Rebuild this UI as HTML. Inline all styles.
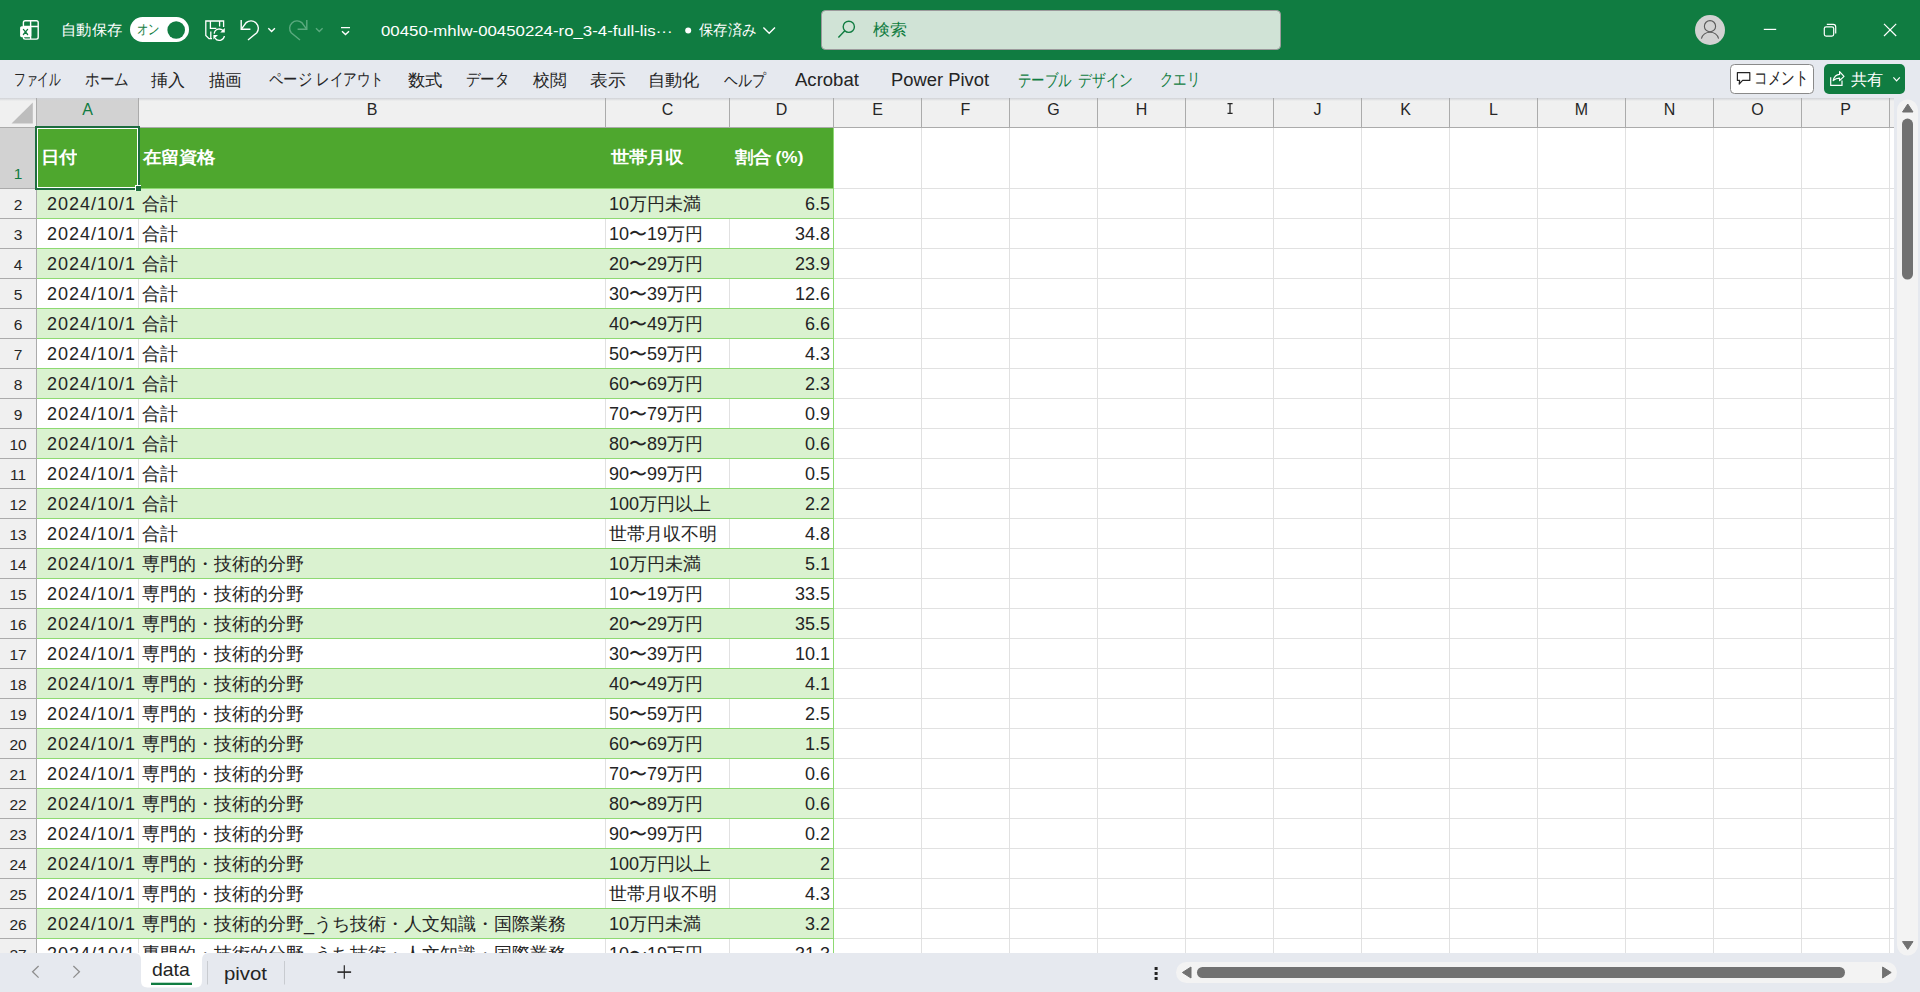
<!DOCTYPE html><html><head><meta charset="utf-8"><style>
*{margin:0;padding:0;box-sizing:border-box}
html,body{width:1920px;height:992px;overflow:hidden;background:#fff;font-family:"Liberation Sans",sans-serif}
.a{position:absolute}
.t{position:absolute;white-space:nowrap}
.wt{position:absolute;color:#fff;white-space:nowrap}
.tab{position:absolute;top:60px;height:38px;line-height:38px;font-size:17px;color:#242424;white-space:nowrap}
.ch{position:absolute;top:98px;height:29px;line-height:18px;padding-top:3px;text-align:center;font-size:16px;color:#262626}
.rh{position:absolute;left:0;width:36px;height:29px;line-height:18px;padding-top:7px;text-align:center;font-size:15.5px;color:#262626}
.c{position:absolute;height:29px;line-height:30px;font-size:18px;color:#242424;white-space:nowrap;letter-spacing:0}
.d{letter-spacing:1px}
.tht{position:absolute;top:128px;height:60px;line-height:59px;font-size:18px;transform:scaleY(0.92);transform-origin:0 50%;font-weight:bold;color:#fff;white-space:nowrap}
</style></head><body>
<div class="a" style="left:0;top:0;width:1920px;height:60px;background:#107C41"></div>

<svg class="a" style="left:0;top:0" width="1920" height="60" viewBox="0 0 1920 60">
 <g fill="none" stroke="#fff" stroke-width="1.4">
  <rect x="23.4" y="20.8" width="14.8" height="18.3" rx="1.8"/>
  <path d="M30.6 20.8 V39.1 M23.4 26.5 H38.2"/>
 </g>
 <rect x="20.1" y="26.2" width="11.2" height="11" rx="1.6" fill="#fff"/>
 <path d="M23.4 29.4 L27.6 34.5 M27.6 29.4 L23.4 34.5" stroke="#107C41" stroke-width="1.3" stroke-linecap="round"/>
 <rect x="130" y="17" width="59" height="25" rx="12.5" fill="#fff"/>
 <circle cx="176.2" cy="30" r="8.8" fill="#107C41"/>
 <g fill="none" stroke="#fff" stroke-width="1.3">
  <path d="M223.6 27 V21 H205.8 V35.4 L209 38.6 H212"/>
  <path d="M210.4 21 V28.3 H216.4 M219.6 21 V26.6 M210.8 31.4 V38"/>
  <path d="M214.2 33.6 A5.2 5.2 0 0 1 223.6 31.2 M224.4 36 A5.2 5.2 0 0 1 215 38.2"/>
 </g>
 <path d="M224.8 28 V32.6 H220.2 Z M213.4 39.6 V35 H218 Z" fill="#fff"/>
 <g fill="none" stroke="#fff" stroke-width="1.4">
  <path d="M241.2 20 V29.2 H250.4"/>
  <path d="M241.6 28.8 L246.2 22.6 A7.4 7.4 0 0 1 256.8 32.8 L248 40"/>
  <path d="M268.3 28.2 L271.6 31.4 L274.9 28.2"/>
  <path d="M341 27.6 H350 M342 31.2 L345.5 34.6 L349 31.2"/>
 </g>
 <g fill="none" stroke="#5BAA7F" stroke-width="1.4">
  <path d="M306.8 20 V29.2 H297.6"/>
  <path d="M306.4 28.8 L301.8 22.6 A7.4 7.4 0 0 0 291.2 32.8 L300 40"/>
  <path d="M316 28.2 L319.3 31.4 L322.6 28.2"/>
 </g>
 <circle cx="688.2" cy="30.4" r="3" fill="#fff"/>
 <path d="M763.4 27.4 L769.2 33.2 L775 27.4" fill="none" stroke="#fff" stroke-width="1.4"/>
 <rect x="821.5" y="10.5" width="459" height="39" rx="4" fill="#D0E3D6" stroke="#9C9A9C" stroke-width="1"/>
 <g fill="none" stroke="#107C41" stroke-width="1.4">
  <circle cx="848.8" cy="26.8" r="5.6"/>
  <path d="M844.8 30.8 L838.4 37.6"/>
 </g>
 <circle cx="1710" cy="30" r="15" fill="#D2D2D2"/>
 <g fill="none" stroke="#5A5A5A" stroke-width="1.1">
  <circle cx="1710" cy="26.2" r="5.6"/>
  <path d="M1701.4 38.6 A9 9 0 0 1 1718.6 38.6"/>
 </g>
 <g fill="none" stroke="#fff" stroke-width="1.2">
  <path d="M1763.8 29.4 H1776.2"/>
  <rect x="1824.3" y="26.8" width="9.4" height="9.3" rx="1.8"/>
  <path d="M1826.8 24.4 H1833.2 Q1835.7 24.4 1835.7 26.9 V33.4"/>
  <path d="M1884 23.8 L1896.2 36 M1896.2 23.8 L1884 36"/>
 </g>
</svg>

<div class="a" style="left:0;top:60px;width:1920px;height:38px;background:#E6E9EF"></div>

<svg class="a" style="left:1720px;top:60px" width="200" height="38" viewBox="1720 60 200 38">
 <rect x="1730.5" y="64.5" width="83" height="29" rx="4" fill="#fff" stroke="#8A8A8A"/>
 <path d="M1737.4 72.6 H1749.8 V80.4 H1742.6 L1739.2 84 L1739.6 80.4 H1737.4 Z" fill="none" stroke="#242424" stroke-width="1.2" stroke-linejoin="round"/>
 <rect x="1824" y="64" width="81" height="30" rx="5" fill="#107C41"/>
 <g fill="none" stroke="#fff" stroke-width="1.2">
  <path d="M1830.7 77.2 V85.3 H1842 V80.6"/>
  <path d="M1833.2 80.6 Q1834.6 74.6 1839.6 74.4 V71.6 L1844 76.4 L1839.6 80.6 V78.2 Q1836 78.1 1833.2 80.6 Z" stroke-linejoin="round"/>
  <path d="M1893.4 77.4 L1896.6 80.8 L1899.8 77.4"/>
 </g>
</svg>

<div class="a" style="left:0;top:98px;width:1894px;height:29px;background:#F0F0F0"></div>
<div class="a" style="left:37px;top:98px;width:101px;height:29px;background:#D2D2D2"></div>
<div class="a" style="left:0;top:98px;width:1894px;height:3px;background:linear-gradient(#D0D2D6,rgba(240,240,240,0))"></div>
<div class="a" style="left:0;top:127px;width:1894px;height:1px;background:#ABABAB"></div>
<div class="a" style="left:0;top:128px;width:36px;height:825px;background:#F0F0F0"></div>
<div class="a" style="left:0;top:128px;width:36px;height:60px;background:#D2D2D2"></div>
<div class="ch" style="left:37px;width:101px;color:#107C41">A</div>
<div class="a" style="left:138px;top:98px;width:1px;height:29px;background:#ABABAB"></div>
<div class="ch" style="left:139px;width:466px;color:#262626">B</div>
<div class="a" style="left:605px;top:98px;width:1px;height:29px;background:#ABABAB"></div>
<div class="ch" style="left:606px;width:123px;color:#262626">C</div>
<div class="a" style="left:729px;top:98px;width:1px;height:29px;background:#ABABAB"></div>
<div class="ch" style="left:730px;width:103px;color:#262626">D</div>
<div class="a" style="left:833px;top:98px;width:1px;height:29px;background:#ABABAB"></div>
<div class="ch" style="left:834px;width:87px;color:#262626">E</div>
<div class="a" style="left:921px;top:98px;width:1px;height:29px;background:#ABABAB"></div>
<div class="ch" style="left:922px;width:87px;color:#262626">F</div>
<div class="a" style="left:1009px;top:98px;width:1px;height:29px;background:#ABABAB"></div>
<div class="ch" style="left:1010px;width:87px;color:#262626">G</div>
<div class="a" style="left:1097px;top:98px;width:1px;height:29px;background:#ABABAB"></div>
<div class="ch" style="left:1098px;width:87px;color:#262626">H</div>
<div class="a" style="left:1185px;top:98px;width:1px;height:29px;background:#ABABAB"></div>
<svg class="a" style="left:1186px;top:98px" width="87" height="29"><path d="M41.5 5.6 H46.6 M41.5 15.4 H46.6 M44.0 5.6 V15.4" stroke="#262626" stroke-width="1.3" fill="none"/></svg>
<div class="a" style="left:1273px;top:98px;width:1px;height:29px;background:#ABABAB"></div>
<div class="ch" style="left:1274px;width:87px;color:#262626">J</div>
<div class="a" style="left:1361px;top:98px;width:1px;height:29px;background:#ABABAB"></div>
<div class="ch" style="left:1362px;width:87px;color:#262626">K</div>
<div class="a" style="left:1449px;top:98px;width:1px;height:29px;background:#ABABAB"></div>
<div class="ch" style="left:1450px;width:87px;color:#262626">L</div>
<div class="a" style="left:1537px;top:98px;width:1px;height:29px;background:#ABABAB"></div>
<div class="ch" style="left:1538px;width:87px;color:#262626">M</div>
<div class="a" style="left:1625px;top:98px;width:1px;height:29px;background:#ABABAB"></div>
<div class="ch" style="left:1626px;width:87px;color:#262626">N</div>
<div class="a" style="left:1713px;top:98px;width:1px;height:29px;background:#ABABAB"></div>
<div class="ch" style="left:1714px;width:87px;color:#262626">O</div>
<div class="a" style="left:1801px;top:98px;width:1px;height:29px;background:#ABABAB"></div>
<div class="ch" style="left:1802px;width:87px;color:#262626">P</div>
<div class="a" style="left:1889px;top:98px;width:1px;height:29px;background:#ABABAB"></div>
<div class="a" style="left:36px;top:98px;width:1px;height:855px;background:#ABABAB"></div>
<div class="a" style="left:138px;top:128px;width:1px;height:825px;background:#E1E1E1"></div>
<div class="a" style="left:605px;top:128px;width:1px;height:825px;background:#E1E1E1"></div>
<div class="a" style="left:729px;top:128px;width:1px;height:825px;background:#E1E1E1"></div>
<div class="a" style="left:833px;top:128px;width:1px;height:825px;background:#E1E1E1"></div>
<div class="a" style="left:921px;top:128px;width:1px;height:825px;background:#E1E1E1"></div>
<div class="a" style="left:1009px;top:128px;width:1px;height:825px;background:#E1E1E1"></div>
<div class="a" style="left:1097px;top:128px;width:1px;height:825px;background:#E1E1E1"></div>
<div class="a" style="left:1185px;top:128px;width:1px;height:825px;background:#E1E1E1"></div>
<div class="a" style="left:1273px;top:128px;width:1px;height:825px;background:#E1E1E1"></div>
<div class="a" style="left:1361px;top:128px;width:1px;height:825px;background:#E1E1E1"></div>
<div class="a" style="left:1449px;top:128px;width:1px;height:825px;background:#E1E1E1"></div>
<div class="a" style="left:1537px;top:128px;width:1px;height:825px;background:#E1E1E1"></div>
<div class="a" style="left:1625px;top:128px;width:1px;height:825px;background:#E1E1E1"></div>
<div class="a" style="left:1713px;top:128px;width:1px;height:825px;background:#E1E1E1"></div>
<div class="a" style="left:1801px;top:128px;width:1px;height:825px;background:#E1E1E1"></div>
<div class="a" style="left:1889px;top:128px;width:1px;height:825px;background:#E1E1E1"></div>
<div class="a" style="left:37px;top:188px;width:1857px;height:1px;background:#E1E1E1"></div>
<div class="a" style="left:0;top:188px;width:36px;height:1px;background:#ABABAB"></div>
<div class="a" style="left:37px;top:218px;width:1857px;height:1px;background:#E1E1E1"></div>
<div class="a" style="left:0;top:218px;width:36px;height:1px;background:#ABABAB"></div>
<div class="a" style="left:37px;top:248px;width:1857px;height:1px;background:#E1E1E1"></div>
<div class="a" style="left:0;top:248px;width:36px;height:1px;background:#ABABAB"></div>
<div class="a" style="left:37px;top:278px;width:1857px;height:1px;background:#E1E1E1"></div>
<div class="a" style="left:0;top:278px;width:36px;height:1px;background:#ABABAB"></div>
<div class="a" style="left:37px;top:308px;width:1857px;height:1px;background:#E1E1E1"></div>
<div class="a" style="left:0;top:308px;width:36px;height:1px;background:#ABABAB"></div>
<div class="a" style="left:37px;top:338px;width:1857px;height:1px;background:#E1E1E1"></div>
<div class="a" style="left:0;top:338px;width:36px;height:1px;background:#ABABAB"></div>
<div class="a" style="left:37px;top:368px;width:1857px;height:1px;background:#E1E1E1"></div>
<div class="a" style="left:0;top:368px;width:36px;height:1px;background:#ABABAB"></div>
<div class="a" style="left:37px;top:398px;width:1857px;height:1px;background:#E1E1E1"></div>
<div class="a" style="left:0;top:398px;width:36px;height:1px;background:#ABABAB"></div>
<div class="a" style="left:37px;top:428px;width:1857px;height:1px;background:#E1E1E1"></div>
<div class="a" style="left:0;top:428px;width:36px;height:1px;background:#ABABAB"></div>
<div class="a" style="left:37px;top:458px;width:1857px;height:1px;background:#E1E1E1"></div>
<div class="a" style="left:0;top:458px;width:36px;height:1px;background:#ABABAB"></div>
<div class="a" style="left:37px;top:488px;width:1857px;height:1px;background:#E1E1E1"></div>
<div class="a" style="left:0;top:488px;width:36px;height:1px;background:#ABABAB"></div>
<div class="a" style="left:37px;top:518px;width:1857px;height:1px;background:#E1E1E1"></div>
<div class="a" style="left:0;top:518px;width:36px;height:1px;background:#ABABAB"></div>
<div class="a" style="left:37px;top:548px;width:1857px;height:1px;background:#E1E1E1"></div>
<div class="a" style="left:0;top:548px;width:36px;height:1px;background:#ABABAB"></div>
<div class="a" style="left:37px;top:578px;width:1857px;height:1px;background:#E1E1E1"></div>
<div class="a" style="left:0;top:578px;width:36px;height:1px;background:#ABABAB"></div>
<div class="a" style="left:37px;top:608px;width:1857px;height:1px;background:#E1E1E1"></div>
<div class="a" style="left:0;top:608px;width:36px;height:1px;background:#ABABAB"></div>
<div class="a" style="left:37px;top:638px;width:1857px;height:1px;background:#E1E1E1"></div>
<div class="a" style="left:0;top:638px;width:36px;height:1px;background:#ABABAB"></div>
<div class="a" style="left:37px;top:668px;width:1857px;height:1px;background:#E1E1E1"></div>
<div class="a" style="left:0;top:668px;width:36px;height:1px;background:#ABABAB"></div>
<div class="a" style="left:37px;top:698px;width:1857px;height:1px;background:#E1E1E1"></div>
<div class="a" style="left:0;top:698px;width:36px;height:1px;background:#ABABAB"></div>
<div class="a" style="left:37px;top:728px;width:1857px;height:1px;background:#E1E1E1"></div>
<div class="a" style="left:0;top:728px;width:36px;height:1px;background:#ABABAB"></div>
<div class="a" style="left:37px;top:758px;width:1857px;height:1px;background:#E1E1E1"></div>
<div class="a" style="left:0;top:758px;width:36px;height:1px;background:#ABABAB"></div>
<div class="a" style="left:37px;top:788px;width:1857px;height:1px;background:#E1E1E1"></div>
<div class="a" style="left:0;top:788px;width:36px;height:1px;background:#ABABAB"></div>
<div class="a" style="left:37px;top:818px;width:1857px;height:1px;background:#E1E1E1"></div>
<div class="a" style="left:0;top:818px;width:36px;height:1px;background:#ABABAB"></div>
<div class="a" style="left:37px;top:848px;width:1857px;height:1px;background:#E1E1E1"></div>
<div class="a" style="left:0;top:848px;width:36px;height:1px;background:#ABABAB"></div>
<div class="a" style="left:37px;top:878px;width:1857px;height:1px;background:#E1E1E1"></div>
<div class="a" style="left:0;top:878px;width:36px;height:1px;background:#ABABAB"></div>
<div class="a" style="left:37px;top:908px;width:1857px;height:1px;background:#E1E1E1"></div>
<div class="a" style="left:0;top:908px;width:36px;height:1px;background:#ABABAB"></div>
<div class="a" style="left:37px;top:938px;width:1857px;height:1px;background:#E1E1E1"></div>
<div class="a" style="left:0;top:938px;width:36px;height:1px;background:#ABABAB"></div>
<div class="a" style="left:37px;top:968px;width:1857px;height:1px;background:#E1E1E1"></div>
<div class="a" style="left:0;top:968px;width:36px;height:1px;background:#ABABAB"></div>
<div class="a" style="left:37px;top:128px;width:796px;height:60px;background:#4EA72E"></div>
<div class="tht" style="left:41px">日付</div>
<div class="tht" style="left:143px">在留資格</div>
<div class="tht" style="left:611px">世帯月収</div>
<div class="tht" style="left:734.5px">割合 (%)</div>
<div class="a" style="left:37px;top:189px;width:796px;height:29px;background:#DAF2D0"></div>
<div class="a" style="left:37px;top:218px;width:796px;height:1px;background:#8ED973"></div>
<div class="a" style="left:37px;top:188px;width:796px;height:1px;background:#8ED973"></div>
<div class="c d" style="top:189px;left:47px">2024/10/1</div>
<div class="c" style="top:189px;left:142px">合計</div>
<div class="c" style="top:189px;left:609px">10万円未満</div>
<div class="c" style="top:189px;right:1090px">6.5</div>
<div class="rh" style="top:189px">2</div>
<div class="a" style="left:37px;top:248px;width:796px;height:1px;background:#8ED973"></div>
<div class="c d" style="top:219px;left:47px">2024/10/1</div>
<div class="c" style="top:219px;left:142px">合計</div>
<div class="c" style="top:219px;left:609px">10〜19万円</div>
<div class="c" style="top:219px;right:1090px">34.8</div>
<div class="rh" style="top:219px">3</div>
<div class="a" style="left:37px;top:249px;width:796px;height:29px;background:#DAF2D0"></div>
<div class="a" style="left:37px;top:278px;width:796px;height:1px;background:#8ED973"></div>
<div class="c d" style="top:249px;left:47px">2024/10/1</div>
<div class="c" style="top:249px;left:142px">合計</div>
<div class="c" style="top:249px;left:609px">20〜29万円</div>
<div class="c" style="top:249px;right:1090px">23.9</div>
<div class="rh" style="top:249px">4</div>
<div class="a" style="left:37px;top:308px;width:796px;height:1px;background:#8ED973"></div>
<div class="c d" style="top:279px;left:47px">2024/10/1</div>
<div class="c" style="top:279px;left:142px">合計</div>
<div class="c" style="top:279px;left:609px">30〜39万円</div>
<div class="c" style="top:279px;right:1090px">12.6</div>
<div class="rh" style="top:279px">5</div>
<div class="a" style="left:37px;top:309px;width:796px;height:29px;background:#DAF2D0"></div>
<div class="a" style="left:37px;top:338px;width:796px;height:1px;background:#8ED973"></div>
<div class="c d" style="top:309px;left:47px">2024/10/1</div>
<div class="c" style="top:309px;left:142px">合計</div>
<div class="c" style="top:309px;left:609px">40〜49万円</div>
<div class="c" style="top:309px;right:1090px">6.6</div>
<div class="rh" style="top:309px">6</div>
<div class="a" style="left:37px;top:368px;width:796px;height:1px;background:#8ED973"></div>
<div class="c d" style="top:339px;left:47px">2024/10/1</div>
<div class="c" style="top:339px;left:142px">合計</div>
<div class="c" style="top:339px;left:609px">50〜59万円</div>
<div class="c" style="top:339px;right:1090px">4.3</div>
<div class="rh" style="top:339px">7</div>
<div class="a" style="left:37px;top:369px;width:796px;height:29px;background:#DAF2D0"></div>
<div class="a" style="left:37px;top:398px;width:796px;height:1px;background:#8ED973"></div>
<div class="c d" style="top:369px;left:47px">2024/10/1</div>
<div class="c" style="top:369px;left:142px">合計</div>
<div class="c" style="top:369px;left:609px">60〜69万円</div>
<div class="c" style="top:369px;right:1090px">2.3</div>
<div class="rh" style="top:369px">8</div>
<div class="a" style="left:37px;top:428px;width:796px;height:1px;background:#8ED973"></div>
<div class="c d" style="top:399px;left:47px">2024/10/1</div>
<div class="c" style="top:399px;left:142px">合計</div>
<div class="c" style="top:399px;left:609px">70〜79万円</div>
<div class="c" style="top:399px;right:1090px">0.9</div>
<div class="rh" style="top:399px">9</div>
<div class="a" style="left:37px;top:429px;width:796px;height:29px;background:#DAF2D0"></div>
<div class="a" style="left:37px;top:458px;width:796px;height:1px;background:#8ED973"></div>
<div class="c d" style="top:429px;left:47px">2024/10/1</div>
<div class="c" style="top:429px;left:142px">合計</div>
<div class="c" style="top:429px;left:609px">80〜89万円</div>
<div class="c" style="top:429px;right:1090px">0.6</div>
<div class="rh" style="top:429px">10</div>
<div class="a" style="left:37px;top:488px;width:796px;height:1px;background:#8ED973"></div>
<div class="c d" style="top:459px;left:47px">2024/10/1</div>
<div class="c" style="top:459px;left:142px">合計</div>
<div class="c" style="top:459px;left:609px">90〜99万円</div>
<div class="c" style="top:459px;right:1090px">0.5</div>
<div class="rh" style="top:459px">11</div>
<div class="a" style="left:37px;top:489px;width:796px;height:29px;background:#DAF2D0"></div>
<div class="a" style="left:37px;top:518px;width:796px;height:1px;background:#8ED973"></div>
<div class="c d" style="top:489px;left:47px">2024/10/1</div>
<div class="c" style="top:489px;left:142px">合計</div>
<div class="c" style="top:489px;left:609px">100万円以上</div>
<div class="c" style="top:489px;right:1090px">2.2</div>
<div class="rh" style="top:489px">12</div>
<div class="a" style="left:37px;top:548px;width:796px;height:1px;background:#8ED973"></div>
<div class="c d" style="top:519px;left:47px">2024/10/1</div>
<div class="c" style="top:519px;left:142px">合計</div>
<div class="c" style="top:519px;left:609px">世帯月収不明</div>
<div class="c" style="top:519px;right:1090px">4.8</div>
<div class="rh" style="top:519px">13</div>
<div class="a" style="left:37px;top:549px;width:796px;height:29px;background:#DAF2D0"></div>
<div class="a" style="left:37px;top:578px;width:796px;height:1px;background:#8ED973"></div>
<div class="c d" style="top:549px;left:47px">2024/10/1</div>
<div class="c" style="top:549px;left:142px">専門的・技術的分野</div>
<div class="c" style="top:549px;left:609px">10万円未満</div>
<div class="c" style="top:549px;right:1090px">5.1</div>
<div class="rh" style="top:549px">14</div>
<div class="a" style="left:37px;top:608px;width:796px;height:1px;background:#8ED973"></div>
<div class="c d" style="top:579px;left:47px">2024/10/1</div>
<div class="c" style="top:579px;left:142px">専門的・技術的分野</div>
<div class="c" style="top:579px;left:609px">10〜19万円</div>
<div class="c" style="top:579px;right:1090px">33.5</div>
<div class="rh" style="top:579px">15</div>
<div class="a" style="left:37px;top:609px;width:796px;height:29px;background:#DAF2D0"></div>
<div class="a" style="left:37px;top:638px;width:796px;height:1px;background:#8ED973"></div>
<div class="c d" style="top:609px;left:47px">2024/10/1</div>
<div class="c" style="top:609px;left:142px">専門的・技術的分野</div>
<div class="c" style="top:609px;left:609px">20〜29万円</div>
<div class="c" style="top:609px;right:1090px">35.5</div>
<div class="rh" style="top:609px">16</div>
<div class="a" style="left:37px;top:668px;width:796px;height:1px;background:#8ED973"></div>
<div class="c d" style="top:639px;left:47px">2024/10/1</div>
<div class="c" style="top:639px;left:142px">専門的・技術的分野</div>
<div class="c" style="top:639px;left:609px">30〜39万円</div>
<div class="c" style="top:639px;right:1090px">10.1</div>
<div class="rh" style="top:639px">17</div>
<div class="a" style="left:37px;top:669px;width:796px;height:29px;background:#DAF2D0"></div>
<div class="a" style="left:37px;top:698px;width:796px;height:1px;background:#8ED973"></div>
<div class="c d" style="top:669px;left:47px">2024/10/1</div>
<div class="c" style="top:669px;left:142px">専門的・技術的分野</div>
<div class="c" style="top:669px;left:609px">40〜49万円</div>
<div class="c" style="top:669px;right:1090px">4.1</div>
<div class="rh" style="top:669px">18</div>
<div class="a" style="left:37px;top:728px;width:796px;height:1px;background:#8ED973"></div>
<div class="c d" style="top:699px;left:47px">2024/10/1</div>
<div class="c" style="top:699px;left:142px">専門的・技術的分野</div>
<div class="c" style="top:699px;left:609px">50〜59万円</div>
<div class="c" style="top:699px;right:1090px">2.5</div>
<div class="rh" style="top:699px">19</div>
<div class="a" style="left:37px;top:729px;width:796px;height:29px;background:#DAF2D0"></div>
<div class="a" style="left:37px;top:758px;width:796px;height:1px;background:#8ED973"></div>
<div class="c d" style="top:729px;left:47px">2024/10/1</div>
<div class="c" style="top:729px;left:142px">専門的・技術的分野</div>
<div class="c" style="top:729px;left:609px">60〜69万円</div>
<div class="c" style="top:729px;right:1090px">1.5</div>
<div class="rh" style="top:729px">20</div>
<div class="a" style="left:37px;top:788px;width:796px;height:1px;background:#8ED973"></div>
<div class="c d" style="top:759px;left:47px">2024/10/1</div>
<div class="c" style="top:759px;left:142px">専門的・技術的分野</div>
<div class="c" style="top:759px;left:609px">70〜79万円</div>
<div class="c" style="top:759px;right:1090px">0.6</div>
<div class="rh" style="top:759px">21</div>
<div class="a" style="left:37px;top:789px;width:796px;height:29px;background:#DAF2D0"></div>
<div class="a" style="left:37px;top:818px;width:796px;height:1px;background:#8ED973"></div>
<div class="c d" style="top:789px;left:47px">2024/10/1</div>
<div class="c" style="top:789px;left:142px">専門的・技術的分野</div>
<div class="c" style="top:789px;left:609px">80〜89万円</div>
<div class="c" style="top:789px;right:1090px">0.6</div>
<div class="rh" style="top:789px">22</div>
<div class="a" style="left:37px;top:848px;width:796px;height:1px;background:#8ED973"></div>
<div class="c d" style="top:819px;left:47px">2024/10/1</div>
<div class="c" style="top:819px;left:142px">専門的・技術的分野</div>
<div class="c" style="top:819px;left:609px">90〜99万円</div>
<div class="c" style="top:819px;right:1090px">0.2</div>
<div class="rh" style="top:819px">23</div>
<div class="a" style="left:37px;top:849px;width:796px;height:29px;background:#DAF2D0"></div>
<div class="a" style="left:37px;top:878px;width:796px;height:1px;background:#8ED973"></div>
<div class="c d" style="top:849px;left:47px">2024/10/1</div>
<div class="c" style="top:849px;left:142px">専門的・技術的分野</div>
<div class="c" style="top:849px;left:609px">100万円以上</div>
<div class="c" style="top:849px;right:1090px">2</div>
<div class="rh" style="top:849px">24</div>
<div class="a" style="left:37px;top:908px;width:796px;height:1px;background:#8ED973"></div>
<div class="c d" style="top:879px;left:47px">2024/10/1</div>
<div class="c" style="top:879px;left:142px">専門的・技術的分野</div>
<div class="c" style="top:879px;left:609px">世帯月収不明</div>
<div class="c" style="top:879px;right:1090px">4.3</div>
<div class="rh" style="top:879px">25</div>
<div class="a" style="left:37px;top:909px;width:796px;height:29px;background:#DAF2D0"></div>
<div class="a" style="left:37px;top:938px;width:796px;height:1px;background:#8ED973"></div>
<div class="c d" style="top:909px;left:47px">2024/10/1</div>
<div class="c" style="top:909px;left:142px">専門的・技術的分野_うち技術・人文知識・国際業務</div>
<div class="c" style="top:909px;left:609px">10万円未満</div>
<div class="c" style="top:909px;right:1090px">3.2</div>
<div class="rh" style="top:909px">26</div>
<div class="a" style="left:37px;top:968px;width:796px;height:1px;background:#8ED973"></div>
<div class="c d" style="top:939px;left:47px">2024/10/1</div>
<div class="c" style="top:939px;left:142px">専門的・技術的分野_うち技術・人文知識・国際業務</div>
<div class="c" style="top:939px;left:609px">10〜19万円</div>
<div class="c" style="top:939px;right:1090px">31.3</div>
<div class="rh" style="top:939px">27</div>
<div class="rh" style="top:128px;height:60px;padding-top:37px;color:#107C41">1</div>
<div class="a" style="left:833px;top:128px;width:1px;height:825px;background:#8ED973"></div>
<svg class="a" style="left:0;top:98px" width="36" height="29"><path d="M32.8 4.5 L32.8 25.4 L11.5 25.4 Z" fill="#BDBDBD"/></svg>
<div class="a" style="left:35px;top:126px;width:105px;height:64px;border:2px solid #1D6D3F"></div>
<div class="a" style="left:37px;top:128px;width:101px;height:60px;border:1px solid #fff"></div>
<div class="a" style="left:135px;top:185px;width:6px;height:6px;background:#fff"></div>
<div class="a" style="left:136px;top:186px;width:5px;height:5px;background:#1D6D3F"></div>
<div class="a" style="left:0;top:953px;width:1920px;height:39px;background:#E6E9EF"></div>
<div class="a" style="left:1894px;top:98px;width:26px;height:855px;background:#E6E9EF"></div>

<svg class="a" style="left:0;top:953px" width="1920" height="39" viewBox="0 953 1920 39">
 <path d="M134 953 H209 Q202 953 202 960 V981 Q202 987.5 195.5 987.5 H147.5 Q141 987.5 141 981 V960 Q141 953 134 953 Z" fill="#fff"/>
 <rect x="151" y="982.7" width="41" height="2.3" fill="#107C41"/>
 <path d="M207.5 961 V984.5 M284.5 961 V984.5" stroke="#C8CBD0" stroke-width="1"/>
 <g fill="none" stroke="#8E8E8E" stroke-width="1.3">
  <path d="M38.6 966 L32.6 971.8 L38.6 977.6"/>
  <path d="M73.4 966 L79.4 971.8 L73.4 977.6"/>
 </g>
 <path d="M344.3 965.2 V978.8" stroke="#262626" stroke-width="1.2"/>
 <path d="M337.4 972.1 H351.1" stroke="#262626" stroke-width="1.6"/>
 <rect x="1154.6" y="967" width="3" height="3" fill="#242424"/>
 <rect x="1154.6" y="972" width="3" height="3" fill="#242424"/>
 <rect x="1154.6" y="977" width="3" height="3" fill="#242424"/>
 <rect x="1176" y="962" width="721" height="21" rx="10.5" fill="#F3F3F3"/>
 <path d="M1191 967 V978 L1182.4 972.5 Z" fill="#717171" stroke="#717171" stroke-width="1" stroke-linejoin="round"/>
 <rect x="1197" y="967" width="648" height="11" rx="5.5" fill="#717171"/>
 <path d="M1882.6 967 V978 L1891.2 972.5 Z" fill="#717171" stroke="#717171" stroke-width="1" stroke-linejoin="round"/>
</svg>
<svg class="a" style="left:1894px;top:98px" width="26" height="860" viewBox="1894 98 26 860">
 <rect x="1897" y="99.5" width="21" height="856" rx="10.5" fill="#F3F3F3"/>
 <path d="M1902.5 112 H1913 L1907.75 104 Z" fill="#717171" stroke="#717171" stroke-width="1" stroke-linejoin="round"/>
 <rect x="1902" y="118.6" width="11" height="161" rx="5.5" fill="#717171"/>
 <path d="M1902.5 941.6 H1913 L1907.75 949.4 Z" fill="#717171" stroke="#717171" stroke-width="1" stroke-linejoin="round"/>
</svg>

<div class="t" id="t_autosave" style="left:60.95px;top:21.00px;font-size:15px;line-height:17px;color:#fff;font-weight:normal;transform:scaleX(1.0232);transform-origin:0 0">自動保存</div>
<div class="t" id="t_on" style="left:137.19px;top:21.00px;font-size:14px;line-height:16px;color:#107C41;font-weight:normal;transform:scaleX(0.8120);transform-origin:0 0">オン</div>
<div class="t" id="t_file" style="left:381.17px;top:21.60px;font-size:15.5px;line-height:17.5px;color:#fff;font-weight:normal;transform:scaleX(1.0846);transform-origin:0 0">00450-mhlw-00450224-ro_3-4-full-lis···</div>
<div class="t" id="t_saved" style="left:699.00px;top:21.00px;font-size:15px;line-height:17px;color:#fff;font-weight:normal;transform:scaleX(0.9629);transform-origin:0 0">保存済み</div>
<div class="t" id="t_search" style="left:873.00px;top:20.60px;font-size:16px;line-height:18px;color:#107C41;font-weight:normal;transform:scaleX(1.0645);transform-origin:0 0">検索</div>
<div class="t" id="t_comment" style="left:1753.74px;top:69.00px;font-size:17.5px;line-height:19.5px;color:#242424;font-weight:normal;transform:scaleX(0.7538);transform-origin:0 0">コメント</div>
<div class="t" id="t_share" style="left:1850.79px;top:71.00px;font-size:16px;line-height:18px;color:#fff;font-weight:normal;transform:scaleX(1.0130);transform-origin:0 0">共有</div>
<div class="t" id="t_data" style="left:151.59px;top:958.80px;font-size:19px;line-height:21px;color:#242424;font-weight:normal;transform:scaleX(1.0225);transform-origin:0 0">data</div>
<div class="t" id="t_pivot" style="left:224.30px;top:963.40px;font-size:19px;line-height:21px;color:#242424;font-weight:normal;transform:scaleX(1.0720);transform-origin:0 0">pivot</div>
<div class="t" id="tab0" style="left:14.36px;top:69.50px;font-size:17px;line-height:19px;color:#242424;font-weight:normal;transform:scaleX(0.6894);transform-origin:0 0">ファイル</div>
<div class="t" id="tab1" style="left:84.53px;top:69.50px;font-size:17px;line-height:19px;color:#242424;font-weight:normal;transform:scaleX(0.8574);transform-origin:0 0">ホーム</div>
<div class="t" id="tab2" style="left:151.00px;top:70.50px;font-size:17px;line-height:19px;color:#242424;font-weight:normal;transform:scaleX(1.0000);transform-origin:0 0">挿入</div>
<div class="t" id="tab3" style="left:209.20px;top:70.50px;font-size:17px;line-height:19px;color:#242424;font-weight:normal;transform:scaleX(0.9700);transform-origin:0 0">描画</div>
<div class="t" id="tab4" style="left:269.14px;top:69.50px;font-size:17px;line-height:19px;color:#242424;font-weight:normal;transform:scaleX(0.8417);transform-origin:0 0">ページ</div>
<div class="t" id="tab4b" style="left:315.98px;top:69.50px;font-size:17px;line-height:19px;color:#242424;font-weight:normal;transform:scaleX(0.7981);transform-origin:0 0">レイアウト</div>
<div class="t" id="tab5" style="left:407.79px;top:70.50px;font-size:17px;line-height:19px;color:#242424;font-weight:normal;transform:scaleX(1.0209);transform-origin:0 0">数式</div>
<div class="t" id="tab6" style="left:466.22px;top:69.50px;font-size:17px;line-height:19px;color:#242424;font-weight:normal;transform:scaleX(0.8511);transform-origin:0 0">データ</div>
<div class="t" id="tab7" style="left:532.79px;top:70.50px;font-size:17px;line-height:19px;color:#242424;font-weight:normal;transform:scaleX(0.9853);transform-origin:0 0">校閲</div>
<div class="t" id="tab8" style="left:589.75px;top:70.50px;font-size:17px;line-height:19px;color:#242424;font-weight:normal;transform:scaleX(1.0473);transform-origin:0 0">表示</div>
<div class="t" id="tab9" style="left:647.97px;top:70.50px;font-size:17px;line-height:19px;color:#242424;font-weight:normal;transform:scaleX(1.0104);transform-origin:0 0">自動化</div>
<div class="t" id="tab10" style="left:724.10px;top:70.50px;font-size:17px;line-height:19px;color:#242424;font-weight:normal;transform:scaleX(0.8179);transform-origin:0 0">ヘルプ</div>
<div class="t" id="tab11" style="left:794.95px;top:70.40px;font-size:18px;line-height:20px;color:#242424;font-weight:normal;transform:scaleX(1.0295);transform-origin:0 0">Acrobat</div>
<div class="t" id="tab12" style="left:890.98px;top:70.40px;font-size:18px;line-height:20px;color:#242424;font-weight:normal;transform:scaleX(1.0202);transform-origin:0 0">Power Pivot</div>
<div class="t" id="tab13" style="left:1018.49px;top:70.50px;font-size:17px;line-height:19px;color:#107C41;font-weight:normal;transform:scaleX(0.7914);transform-origin:0 0">テーブル</div>
<div class="t" id="tab13b" style="left:1078.05px;top:70.50px;font-size:17px;line-height:19px;color:#107C41;font-weight:normal;transform:scaleX(0.8102);transform-origin:0 0">デザイン</div>
<div class="t" id="tab14" style="left:1160.25px;top:69.50px;font-size:17px;line-height:19px;color:#107C41;font-weight:normal;transform:scaleX(0.7895);transform-origin:0 0">クエリ</div>
</body></html>
